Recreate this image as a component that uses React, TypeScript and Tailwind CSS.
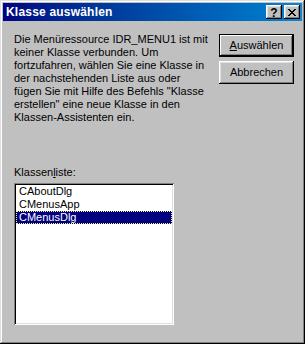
import React from 'react';

const raised =
  'shadow-[inset_-1px_-1px_#000,inset_1px_1px_#fff,inset_-2px_-2px_#808080,inset_2px_2px_#dfdfdf]';

function CaptionButton({ children }: { children: React.ReactNode }) {
  return (
    <div className={`w-[16px] h-[14px] bg-[#c0c0c0] flex items-center justify-center ${raised}`}>
      {children}
    </div>
  );
}

export default function App() {
  const classes = ['CAboutDlg', 'CMenusApp', 'CMenusDlg'];
  const selected = 2;

  return (
    <div
      className="w-[305px] h-[344px] bg-[#c0c0c0] p-[3px] flex flex-col text-black text-[11px] leading-[13px] shadow-[inset_-1px_-1px_#000,inset_1px_1px_#dfdfdf,inset_-2px_-2px_#808080,inset_2px_2px_#fff]"
      style={{ fontFamily: '"Liberation Sans", Arial, sans-serif' }}
    >
      {/* Title bar */}
      <div className="h-[18px] flex items-center pl-[3px] pr-[2px] bg-gradient-to-r from-[#000080] to-[#1084d0]">
        <span className="text-white font-bold text-[12px] leading-[18px] tracking-[0.2px]">Klasse auswählen</span>
        <div className="ml-auto flex items-center gap-[2px]">
          <CaptionButton>
            <span className="font-bold text-[12px] leading-[12px] mt-[1px]">?</span>
          </CaptionButton>
          <CaptionButton>
            <svg width="8" height="7" viewBox="0 0 8 7" shapeRendering="crispEdges">
              <path
                d="M0 0h2v1h-2zM6 0h2v1h-2zM1 1h2v1h-2zM5 1h2v1h-2zM2 2h4v1h-4zM3 3h2v1h-2zM2 4h4v1h-4zM1 5h2v1h-2zM5 5h2v1h-2zM0 6h2v1h-2zM6 6h2v1h-2z"
                fill="#000"
              />
            </svg>
          </CaptionButton>
        </div>
      </div>

      {/* Body */}
      <div className="flex-1 flex pl-[11px] pr-[8px] pt-[12px]">
        <div className="flex-1 flex flex-col">
          <p>
            Die Menüressource IDR_MENU1 ist mit
            <br />
            keiner Klasse verbunden. Um
            <br />
            fortzufahren, wählen Sie eine Klasse in
            <br />
            der nachstehenden Liste aus oder
            <br />
            fügen Sie mit Hilfe des Befehls "Klasse
            <br />
            erstellen" eine neue Klasse in den
            <br />
            Klassen-Assistenten ein.
          </p>

          <div className="mt-[42px]">
            Klassen<span className="underline">l</span>iste:
          </div>

          <div className="mt-[4px] w-[160px] h-[142px] bg-white p-[2px] shadow-[inset_1px_1px_#808080,inset_-1px_-1px_#fff,inset_2px_2px_#000,inset_-2px_-2px_#dfdfdf]">
            {classes.map((c, i) => (
              <div
                key={c}
                className={
                  i === selected
                    ? 'h-[13px] pl-[2px] bg-[#000080] text-white border border-dotted border-[#f8f880] leading-[11px]'
                    : 'h-[13px] pl-[3px]'
                }
              >
                {c}
              </div>
            ))}
          </div>
        </div>

        <div className="w-[75px] flex flex-col gap-[4px] mt-[1px]">
          <button className="w-[75px] h-[23px] bg-[#c0c0c0] border border-black flex items-center justify-center shadow-[inset_-1px_-1px_#000,inset_1px_1px_#fff,inset_-2px_-2px_#808080]">
            <span>
              <span className="underline">A</span>uswählen
            </span>
          </button>
          <button className={`w-[75px] h-[23px] bg-[#c0c0c0] flex items-center justify-center ${raised}`}>
            Abbrechen
          </button>
        </div>
      </div>
    </div>
  );
}
